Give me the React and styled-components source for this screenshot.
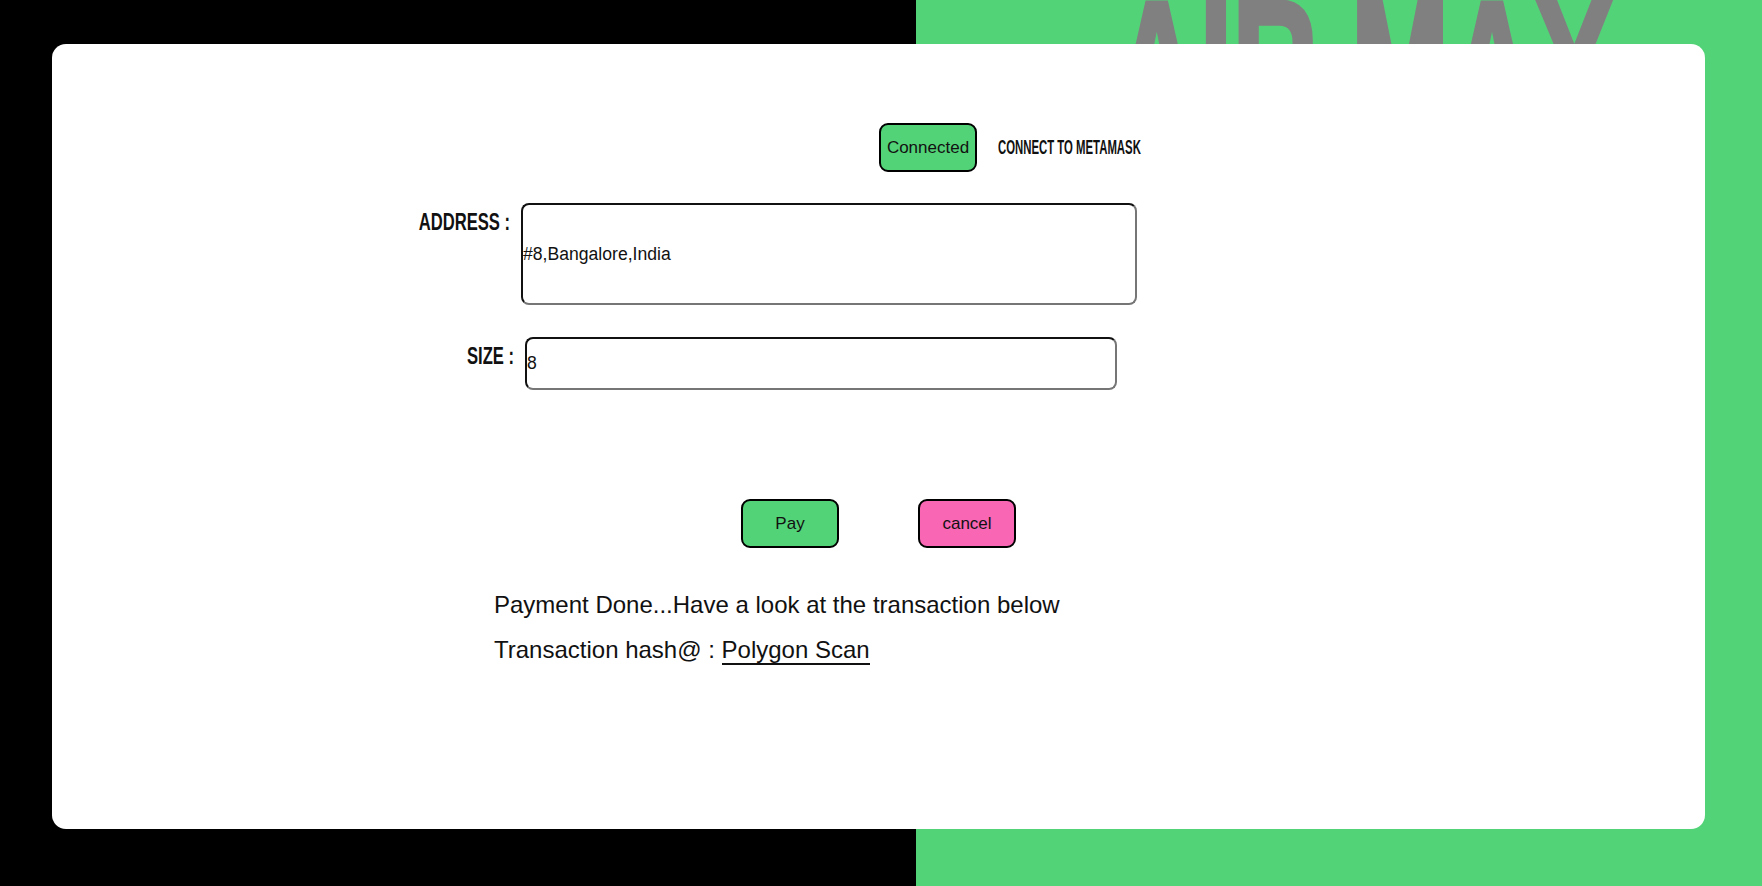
import styled, { createGlobalStyle } from 'styled-components';

const GlobalStyle = createGlobalStyle`
    html, body {
        margin: 0;
        padding: 0;
        overflow: hidden;
    }
    body {
        font-family: "Liberation Sans", Arial, sans-serif;
    }
`;

const App = () => {
    return (
        <Page>
            <GlobalStyle />
            <Backdrop>AIR MAX</Backdrop>
            <Card>
                <WalletRow>
                    <Button $color="#53d378">Connected</Button>
                    <WalletText>Connect to Metamask</WalletText>
                </WalletRow>

                <Field $offset={338} $top={31}>
                    <Label>Address :</Label>
                    <Input
                        $width={616}
                        $height={102}
                        type="text"
                        defaultValue="#8,Bangalore,India"
                    />
                </Field>

                <Field $offset={342} $top={32}>
                    <Label>Size :</Label>
                    <Input $width={592} $height={53} type="text" defaultValue="8" />
                </Field>

                <Actions>
                    <Button $color="#53d378">Pay</Button>
                    <Button $color="#f866b4">cancel</Button>
                </Actions>

                <Messages>
                    <Message>Payment Done...Have a look at the transaction below</Message>
                    <Message>
                        Transaction hash@ : <ScanLink href="#">Polygon Scan</ScanLink>
                    </Message>
                </Messages>
            </Card>
        </Page>
    );
};

const Page = styled.div`
    position: relative;
    height: 886px;
    box-sizing: border-box;
    padding: 44px 0 0 52px;
    overflow: hidden;
    background: linear-gradient(90deg, #000 0, #000 916px, #53d378 916px, #53d378 100%);
`;

// big condensed headline sitting behind the card
const Backdrop = styled.div`
    position: absolute;
    top: -28px;
    left: 1114px;
    font-family: "Liberation Sans", Arial, sans-serif;
    font-weight: 700;
    font-size: 190px;
    line-height: 1;
    color: #808080;
    -webkit-text-stroke: 5px #808080;
    white-space: nowrap;
    transform: scaleX(0.623);
    transform-origin: left top;
`;

const Card = styled.div`
    position: relative;
    z-index: 1;
    width: 1653px;
    height: 785px;
    box-sizing: border-box;
    padding-top: 79px;
    background: #fff;
    border-radius: 14px;
    display: flex;
    flex-direction: column;
    align-items: flex-start;
`;

const WalletRow = styled.div`
    display: flex;
    align-items: center;
    gap: 21px;
    margin-left: 827px;
`;

const WalletText = styled.span`
    display: inline-block;
    font-family: "Liberation Sans", Arial, sans-serif;
    font-weight: 700;
    font-size: 16px;
    text-transform: uppercase;
    white-space: nowrap;
    color: #111;
    transform: scale(0.71, 1.22);
    transform-origin: left center;
`;

const Field = styled.div`
    display: flex;
    align-items: flex-start;
    gap: 11px;
    margin-left: ${(p) => p.$offset}px;
    margin-top: ${(p) => p.$top}px;
`;

const Label = styled.label`
    display: block;
    width: 120px;
    margin-top: 7px;
    text-align: right;
    font-family: "Liberation Sans", Arial, sans-serif;
    font-weight: 700;
    font-size: 20px;
    line-height: 20px;
    text-transform: uppercase;
    white-space: nowrap;
    color: #111;
    transform: scale(0.83, 1.2);
    transform-origin: top right;
`;

const Input = styled.input`
    width: ${(p) => p.$width}px;
    height: ${(p) => p.$height}px;
    box-sizing: border-box;
    margin: 0;
    padding: 0;
    border: 2px solid;
    border-color: #111 #767676 #767676 #111;
    border-radius: 8px;
    background: #fff;
    font-family: "Liberation Sans", Arial, sans-serif;
    font-size: 17.6px;
    color: #111;
    outline: none;
`;

const Actions = styled.div`
    display: flex;
    gap: 79px;
    margin-left: 689px;
    margin-top: 109px;
`;

const Button = styled.button`
    width: 98px;
    height: 49px;
    box-sizing: border-box;
    padding: 0;
    border: 2px solid #000;
    border-radius: 9px;
    background-color: ${(p) => p.$color};
    font-family: "Liberation Sans", Arial, sans-serif;
    font-size: 17px;
    color: #111;
    cursor: pointer;
`;

const Messages = styled.div`
    margin-left: 442px;
    margin-top: 43px;
`;

const Message = styled.p`
    margin: 0 0 17px;
    font-family: "Liberation Sans", Arial, sans-serif;
    font-size: 24px;
    color: #111;
`;

const ScanLink = styled.a`
    color: #111;
    text-decoration: none;
    border-bottom: 2px solid #111;
`;

export default App;
